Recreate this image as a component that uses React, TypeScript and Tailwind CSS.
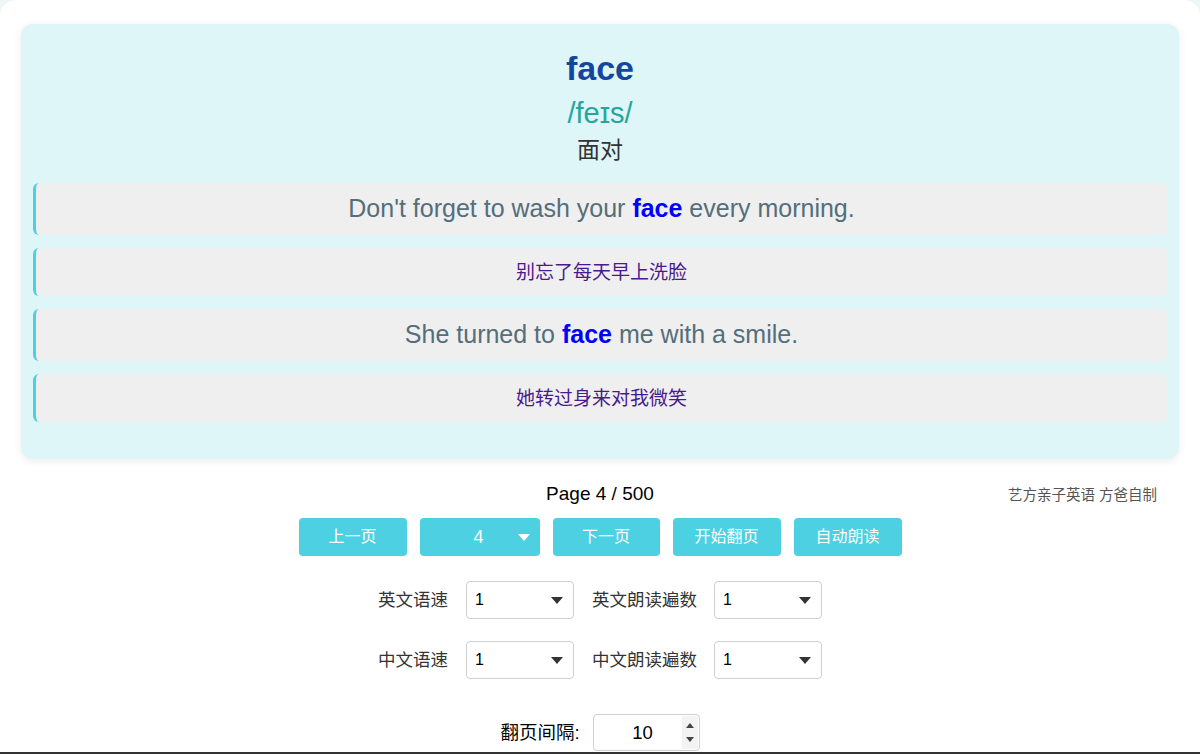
import React from 'react';

const sans = { fontFamily: '"Liberation Sans", Arial, "Noto Sans CJK SC", sans-serif' };

type Line = { text: string; word?: string; zh?: boolean };

const lines: Line[] = [
  { text: "Don't forget to wash your {w} every morning.", word: 'face' },
  { text: '别忘了每天早上洗脸', zh: true },
  { text: 'She turned to {w} me with a smile.', word: 'face' },
  { text: '她转过身来对我微笑', zh: true },
];

function Caret({ color = '#333' }: { color?: string }) {
  return (
    <svg width="12" height="7" viewBox="0 0 12 7">
      <path d="M0 0h12L6 7z" fill={color} />
    </svg>
  );
}

function SentenceRow({ line }: { line: Line }) {
  if (line.zh) {
    return (
      <div className="h-[48px] flex items-center justify-center pt-[2px] bg-[#efefef] border-l-[3px] border-[#4dd0e1] rounded-[6px] text-[19px] text-[#4a1a8c]">
        {line.text}
      </div>
    );
  }
  const [before, after] = line.text.split('{w}');
  return (
    <div className="h-[52px] flex items-center justify-center bg-[#efefef] border-l-[3px] border-[#4dd0e1] rounded-[6px] text-[25px] text-[#546e7a]">
      <span className="whitespace-pre">
        {before}
        <b className="text-[#0000ff]">{line.word}</b>
        {after}
      </span>
    </div>
  );
}

function Select({ value }: { value: string }) {
  return (
    <div className="w-[108px] h-[38px] flex items-center justify-between pl-[8px] pr-[10px] bg-white border border-[#cfcfcf] rounded-[4px] text-[16px] text-black">
      <span>{value}</span>
      <Caret />
    </div>
  );
}

export default function App() {
  return (
    <div className="min-h-screen bg-[#eef6f8]" style={sans}>
      <div className="bg-white rounded-t-[16px] min-h-[754px] px-[21px] pt-[24px] border-b-2 border-[#333]">
        {/* word card */}
        <div className="bg-[#dff6f8] rounded-[12px] shadow-[0_2px_8px_rgba(0,0,0,0.08)] px-[12px] pt-[19px] pb-[37px]">
          <div className="text-center text-[34px] leading-[50px] font-bold text-[#1446a0]">face</div>
          <div className="text-center text-[29px] leading-[36px] mt-[2px] text-[#26a69a]">/feɪs/</div>
          <div className="text-center text-[23px] leading-[30px] mt-[4px] text-[#333]">面对</div>
          <div className="mt-[18px] flex flex-col gap-[13px]">
            {lines.map((l, i) => (
              <SentenceRow key={i} line={l} />
            ))}
          </div>
        </div>

        {/* paging */}
        <div className="relative mt-[24px] h-[22px] flex items-center justify-center text-[19px] text-black">
          Page 4 / 500
          <span className="absolute right-[22px] top-[2px] text-[14.5px] text-[#555]">艺方亲子英语 方爸自制</span>
        </div>
        <div className="mt-[13px] flex justify-center gap-[13px] text-white text-[16px]">
          <button className="w-[108px] h-[38px] bg-[#4dd0e1] rounded-[4px]">上一页</button>
          <div className="w-[120px] h-[38px] bg-[#4dd0e1] rounded-[4px] flex items-center pl-[54px] pr-[10px] justify-between text-[18px]">
            <span>4</span>
            <Caret color="#fff" />
          </div>
          <button className="w-[107px] h-[38px] bg-[#4dd0e1] rounded-[4px]">下一页</button>
          <button className="w-[108px] h-[38px] bg-[#4dd0e1] rounded-[4px]">开始翻页</button>
          <button className="w-[108px] h-[38px] bg-[#4dd0e1] rounded-[4px]">自动朗读</button>
        </div>

        {/* speech settings */}
        <div className="mt-[25px] flex flex-col gap-[22px] items-center text-[17.5px] text-[#333] whitespace-nowrap">
          <div className="flex items-center">
            <span className="mr-[18px]">英文语速</span>
            <Select value="1" />
            <span className="ml-[18px] mr-[17px]">英文朗读遍数</span>
            <Select value="1" />
          </div>
          <div className="flex items-center">
            <span className="mr-[18px]">中文语速</span>
            <Select value="1" />
            <span className="ml-[18px] mr-[17px]">中文朗读遍数</span>
            <Select value="1" />
          </div>
        </div>

        <div className="mt-[35px] flex justify-center items-center text-[18.5px] text-black">
          <span className="mr-[13px]">翻页间隔:</span>
          <div className="w-[107px] h-[37px] flex bg-white border border-[#cfcfcf] rounded-[4px]">
            <span className="flex-1 flex items-center justify-center pl-[10px]">10</span>
            <div className="w-[16px] my-[1px] mr-[1px] bg-[#f3f3f3] flex flex-col items-center justify-center gap-[9px]">
              <svg width="8" height="5" viewBox="0 0 8 5"><path d="M0 5h8L4 0z" fill="#444" /></svg>
              <svg width="8" height="5" viewBox="0 0 8 5"><path d="M0 0h8L4 5z" fill="#444" /></svg>
            </div>
          </div>
        </div>
      </div>
    </div>
  );
}
